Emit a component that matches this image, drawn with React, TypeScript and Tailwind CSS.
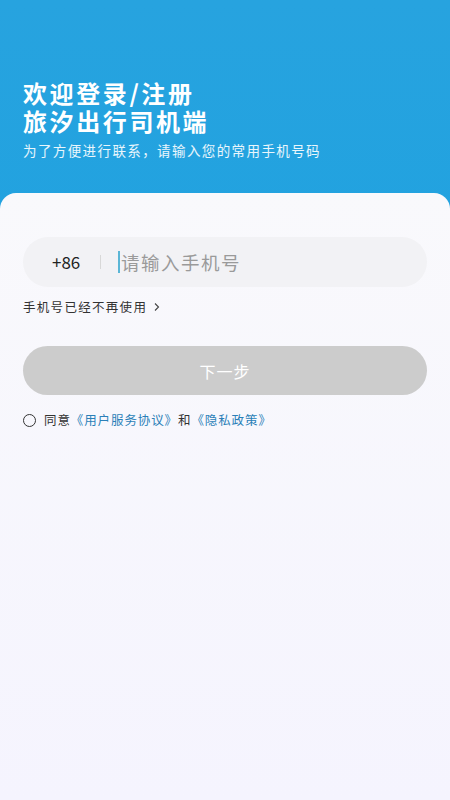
import React, { useState } from 'react';

const FONT = '"Noto Sans CJK SC", "Noto Sans", sans-serif';

const App: React.FC = () => {
  const [phone, setPhone] = useState('');
  const [agreed, setAgreed] = useState(false);

  return (
    <div
      className="w-[450px] h-[800px] flex flex-col bg-gradient-to-b from-[#27a3df] to-[#0ea0e1] overflow-hidden"
      style={{ fontFamily: FONT }}
    >
      {/* Header */}
      <div className="h-[193px] shrink-0 px-[23px] pt-[79px]">
        <h1 className="text-[24px] font-bold leading-[28px] tracking-[2.6px] text-white">
          欢迎登录/注册
          <br />
          旅汐出行司机端
        </h1>
        <p className="mt-[5px] text-[13.5px] leading-[20px] tracking-[1.4px] text-white/90">
          为了方便进行联系，请输入您的常用手机号码
        </p>
      </div>

      {/* Card */}
      <div className="flex-1 rounded-t-[16px] bg-gradient-to-b from-[#f9f9fc] to-[#f5f4fe] px-[23px] pt-[44px]">
        <div className="h-[50px] rounded-full bg-[#f2f2f5] flex items-center pl-[29px] pr-[20px]">
          <span className="text-[17px] text-[#222] w-[33px]">+86</span>
          <span className="ml-[15px] w-px h-[14px] bg-[#d8d8d8]" />
          <input
            value={phone}
            onChange={(e) => setPhone(e.target.value)}
            placeholder="请输入手机号"
            className="ml-[17px] flex-1 bg-transparent outline-none text-[18.5px] tracking-[1.5px] text-[#333] placeholder:text-[#9a9a9a] caret-[#2aa3d8] border-l-2 border-[#5bb6d6] pl-[1px] leading-[22px]"
            style={{ fontFamily: FONT }}
          />
        </div>

        <div className="mt-[10px] h-[20px] flex items-center gap-[6px] text-[12.5px] tracking-[1.3px] text-[#333]">
          <span>手机号已经不再使用</span>
          <svg width="8" height="10" viewBox="0 0 8 10" fill="none">
            <path d="M2 1.5 L5.5 5 L2 8.5" stroke="#444" strokeWidth="1.1" />
          </svg>
        </div>

        <button className="mt-[29px] w-full h-[49px] rounded-full bg-[#cccccc] text-white text-[16px] tracking-[1px]">
          下一步
        </button>

        <div className="mt-[15px] h-[20px] flex items-center text-[12.5px] tracking-[0.9px] text-[#333]">
          <button
            onClick={() => setAgreed(!agreed)}
            className={`w-[13px] h-[13px] rounded-full border border-[#333] ${agreed ? 'bg-[#1e9fdc]' : ''}`}
          />
          <span className="ml-[8px]">同意</span>
          <span className="text-[#2a7fb8]">《用户服务协议》</span>
          <span>和</span>
          <span className="text-[#2a7fb8]">《隐私政策》</span>
        </div>
      </div>
    </div>
  );
};

export default App;
